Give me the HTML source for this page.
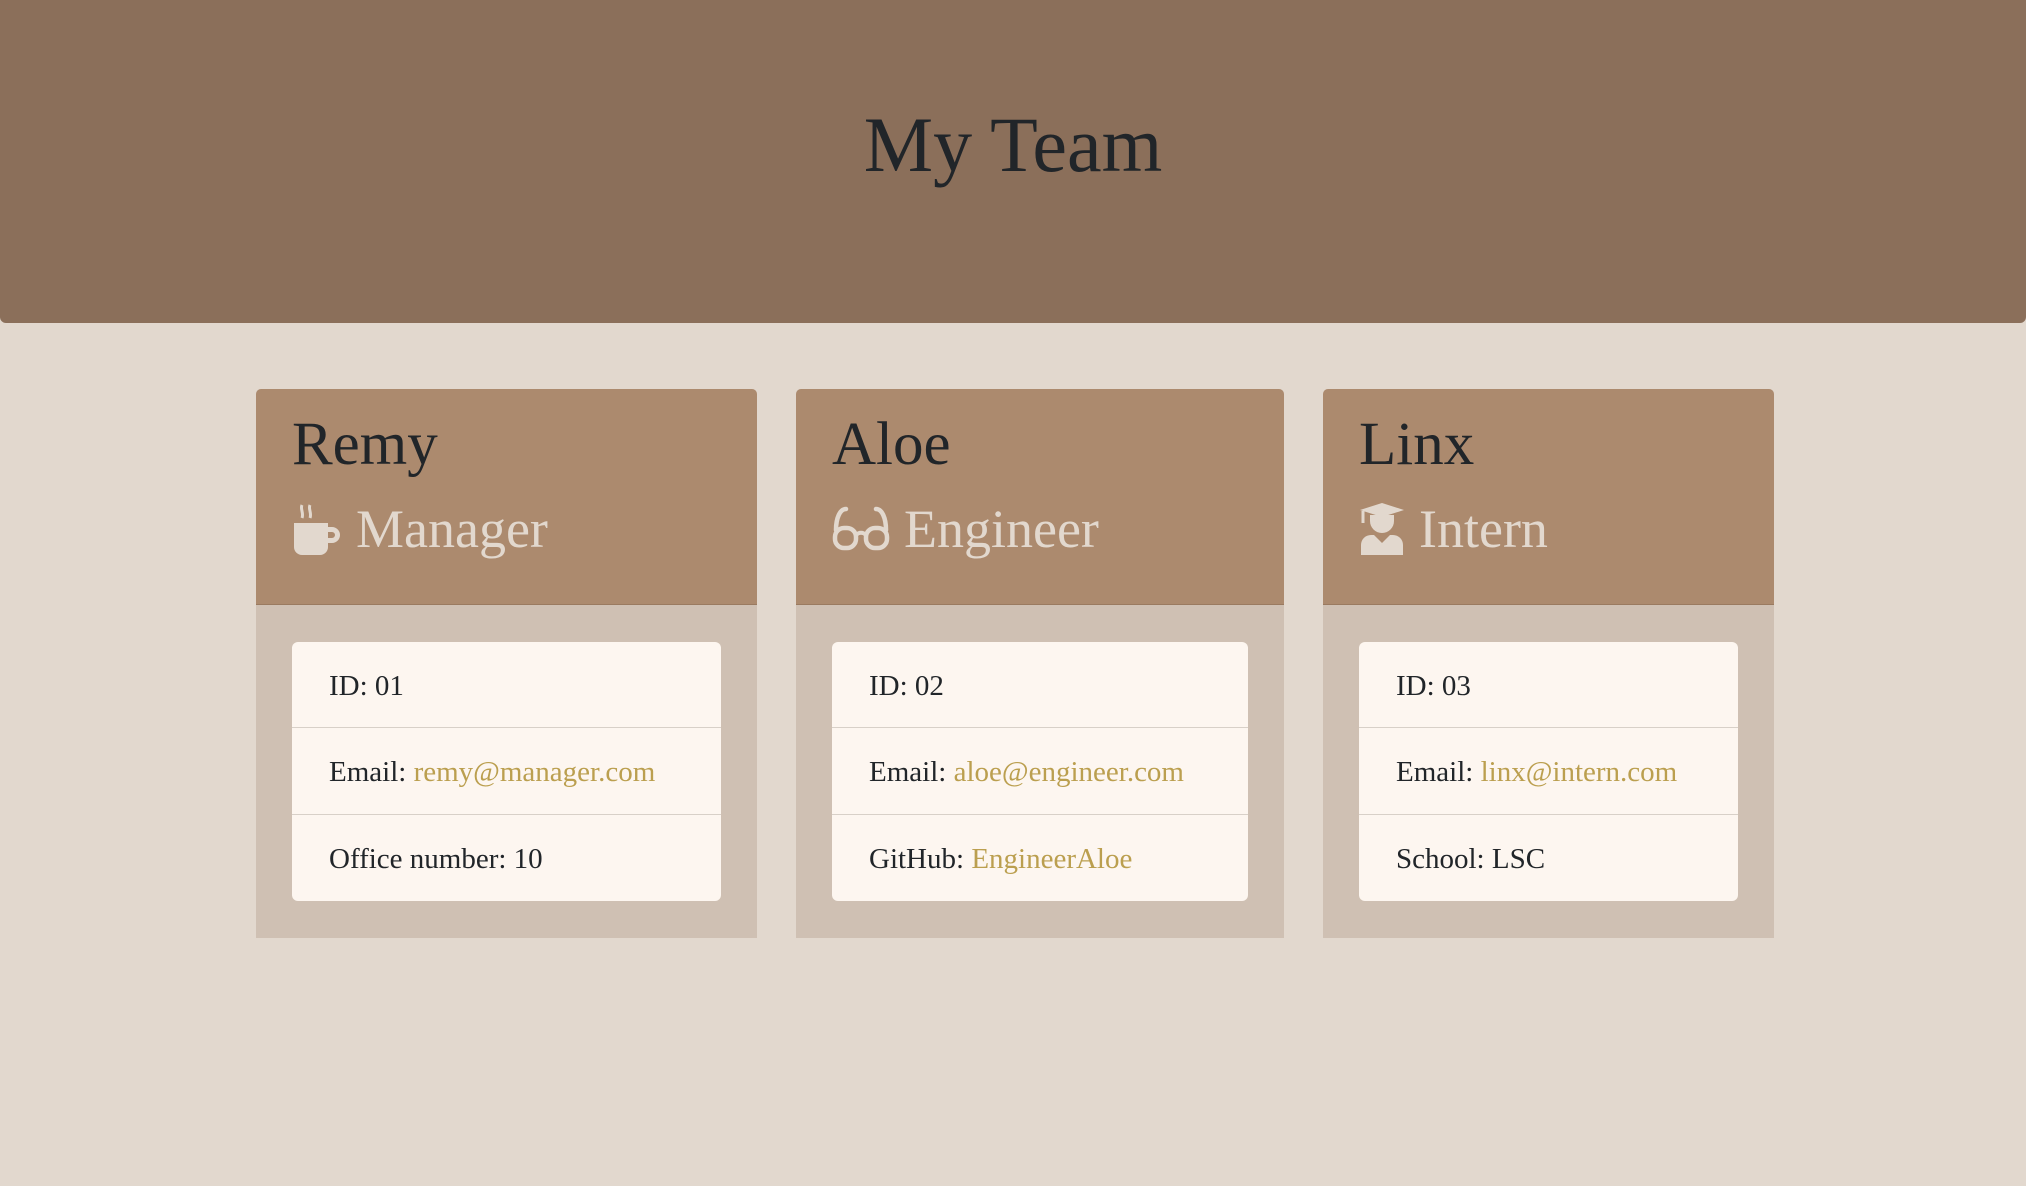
<!DOCTYPE html>
<html><head><meta charset="utf-8"><style>
*{box-sizing:border-box;margin:0;padding:0}
body{width:2026px;height:1186px;background:#e2d8ce;font-family:Georgia,"Liberation Serif",serif;color:#212529;position:relative;overflow:hidden}
.hdr{position:absolute;left:0;top:0;width:2026px;height:323px;background:#8b6f5a;border-radius:0 0 6px 6px}
.hdr h1{position:absolute;left:0;right:0;top:106px;text-align:center;font-weight:400;font-size:78px;line-height:1}
.card{position:absolute;top:389px;height:549px;background:#cfc0b3;border-radius:5px 5px 0 0}
.ch{height:216px;background:#ac8a6e;border-radius:5px 5px 0 0;border-bottom:1px solid #9a7a60;position:relative}
.name{position:absolute;left:36px;top:25px;font-size:61px;line-height:1}
.role{position:absolute;left:36px;top:113px;font-size:54px;color:#e2d8ce;line-height:1;display:flex;align-items:center}
.role svg{margin-right:14px}
.list{position:absolute;left:36px;right:36px;top:253px;height:259px;background:#fdf6f0;border-radius:6px}
.row{height:86.3px;border-bottom:1px solid #d8d0c8;font-size:29px;padding-left:37px;display:flex;align-items:center;padding-top:3px}
.row:last-child{border-bottom:none}
a{color:#bb9f4f;text-decoration:none}
</style></head><body>
<div class="hdr"><h1>My Team</h1></div>

<div class="card" style="left:256px;width:501px">
 <div class="ch"><div class="name">Remy</div>
 <div class="role"><svg width="50" height="52" viewBox="0 0 50 52"><path d="M2 20h34v24a8 8 0 0 1-8 8H10a8 8 0 0 1-8-8z" fill="#e2d8ce"/><path d="M36 24h4a8 8 0 0 1 0 16h-4v-5h4a3 3 0 0 0 0-6h-4z" fill="#e2d8ce"/><path d="M10 2c-2 4 2 8 0 13M18 2c-2 4 2 8 0 13" stroke="#e2d8ce" stroke-width="3" fill="none"/></svg>Manager</div></div>
 <div class="list"><div class="row">ID: 01</div><div class="row">Email:&nbsp;<a>remy@manager.com</a></div><div class="row">Office number: 10</div></div>
</div>

<div class="card" style="left:796px;width:488px">
 <div class="ch"><div class="name">Aloe</div>
 <div class="role"><svg width="58" height="46" viewBox="0 0 58 46"><path d="M14 3C8 3 4 12 4 24M44 3C50 3 54 12 54 24" stroke="#e2d8ce" stroke-width="4.5" fill="none" stroke-linecap="round"/><rect x="3" y="22" width="21" height="20" rx="9" stroke="#e2d8ce" stroke-width="4.5" fill="none"/><rect x="34" y="22" width="21" height="20" rx="9" stroke="#e2d8ce" stroke-width="4.5" fill="none"/><path d="M24 29c3-3 7-3 10 0" stroke="#e2d8ce" stroke-width="4" fill="none"/></svg>Engineer</div></div>
 <div class="list"><div class="row">ID: 02</div><div class="row">Email:&nbsp;<a>aloe@engineer.com</a></div><div class="row">GitHub:&nbsp;<a>EngineerAloe</a></div></div>
</div>

<div class="card" style="left:1323px;width:451px">
 <div class="ch"><div class="name">Linx</div>
 <div class="role"><svg width="46" height="52" viewBox="0 0 46 52"><path d="M23 0L45 7 23 14 1 7z" fill="#e2d8ce"/><path d="M4 8v12" stroke="#e2d8ce" stroke-width="3"/><path d="M11 12h24v6a12 12 0 0 1-24 0z" fill="#e2d8ce"/><path d="M2 52V42a10 10 0 0 1 10-10h3l8 8 8-8h3a10 10 0 0 1 10 10v10z" fill="#e2d8ce"/></svg>Intern</div></div>
 <div class="list"><div class="row">ID: 03</div><div class="row">Email:&nbsp;<a>linx@intern.com</a></div><div class="row">School: LSC</div></div>
</div>
</body></html>
